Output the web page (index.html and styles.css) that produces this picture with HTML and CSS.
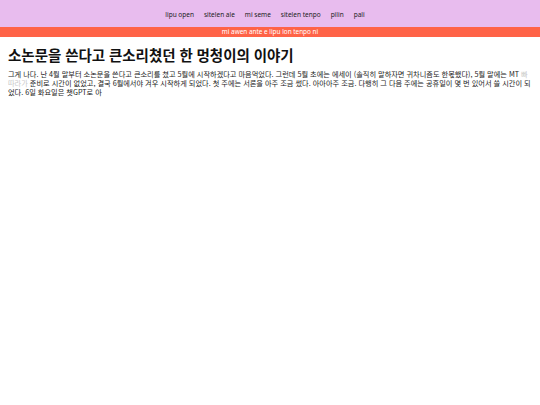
FILE: index.html
```html
<!DOCTYPE html>
<html lang="ko">
<head>
    <meta charset="UTF-8">
    <title>소논문을 쓴다고 큰소리쳤던 한 멍청이의 이야기</title>
    <link rel="stylesheet" href="styles.css">
</head>
<body>
    <nav class="nav">
        <a href="#">lipu open</a>
        <a href="#">sitelen ale</a>
        <a href="#">mi seme</a>
        <a href="#">sitelen tenpo</a>
        <a href="#">pilin</a>
        <a href="#">pali</a>
    </nav>
    <div class="banner">mi awen ante e lipu lon tenpo ni</div>

    <main class="post">
        <h1 class="post-title">소논문을 쓴다고 큰소리쳤던 한 멍청이의 이야기</h1>
        <p class="post-body">그게 나다. 난 4월 말부터 소논문을 쓴다고 큰소리를 쳤고 5월에 시작하겠다고 마음먹었다. 그런데 5월 초에는 에세이 (솔직히 말하자면 귀차니즘도 한몫했다), 5월 말에는 MT <span class="faded">빠 따라가</span> 준비로 시간이 없었고, 결국 6월에서야 겨우 시작하게 되었다. 첫 주에는 서론을 아주 조금 썼다. 아아아주 조금. 다행히 그 다음 주에는 공휴일이 몇 번 있어서 쓸 시간이 되었다. 6일 화요일은 챗GPT로 아</p>
    </main>
</body>
</html>
```

FILE: styles.css
```css
* {
    margin: 0;
    padding: 0;
    box-sizing: border-box;
}

body {
    font-family: 'Noto Sans', 'Noto Sans CJK KR', sans-serif;
    background: #ffffff;
    color: #111;
}

.nav {
    background: #e8bcee;
    height: 27px;
    display: flex;
    justify-content: center;
    align-items: center;
    font-size: 6.5px;
    padding-top: 2px;
}

.nav a {
    color: #222;
    text-decoration: none;
    margin-right: 10px;
}

.banner {
    background: #ff6347;
    color: #fff;
    font-size: 6.4px;
    height: 10px;
    line-height: 10px;
    text-align: center;
}

.post {
    padding: 8px 8px;
}

.post-title {
    font-size: 14.5px;
    font-weight: 700;
    line-height: 20px;
    margin-bottom: 5px;
}

.post-body {
    font-family: 'Noto Sans CJK KR', sans-serif;
    font-size: 7.2px;
    line-height: 9px;
    color: #1a1a1a;
}

.faded {
    color: #c8c8c8;
}
```
